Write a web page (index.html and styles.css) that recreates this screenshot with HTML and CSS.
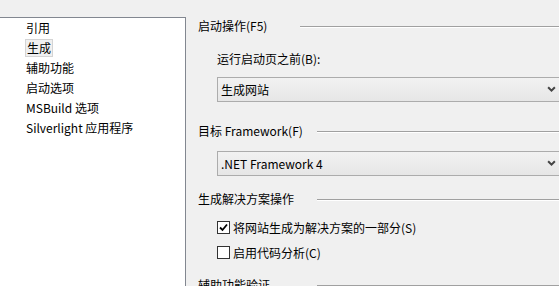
FILE: index.html
```html
<!DOCTYPE html>
<html lang="zh-CN">
<head>
    <meta charset="UTF-8">
    <title>项目属性 - 生成</title>
    <link rel="stylesheet" href="styles.css">
</head>
<body>
    <div class="window">
        <ul class="nav">
            <li class="nav-item">引用</li>
            <li class="nav-item"><span class="selected">生成</span></li>
            <li class="nav-item">辅助功能</li>
            <li class="nav-item">启动选项</li>
            <li class="nav-item">MSBuild 选项</li>
            <li class="nav-item">Silverlight 应用程序</li>
        </ul>

        <div class="pane">
            <div class="group-header">
                <span class="group-label label-narrow">启动操作(F5)</span>
                <span class="group-rule"></span>
            </div>
            <div class="field-label">运行启动页之前(B):</div>
            <div class="select">
                <span>生成网站</span>
                <svg class="chevron" viewBox="0 0 8 6" xmlns="http://www.w3.org/2000/svg">
                    <path d="M1 1L4 4L7 1" fill="none" stroke="currentColor" stroke-width="1.8"/>
                </svg>
            </div>

            <div class="group-header">
                <span class="group-label">目标 Framework(F)</span>
                <span class="group-rule"></span>
            </div>
            <div class="select select-tight">
                <span>.NET Framework 4</span>
                <svg class="chevron" viewBox="0 0 8 6" xmlns="http://www.w3.org/2000/svg">
                    <path d="M1 1L4 4L7 1" fill="none" stroke="currentColor" stroke-width="1.8"/>
                </svg>
            </div>

            <div class="group-header group-checks">
                <span class="group-label">生成解决方案操作</span>
                <span class="group-rule"></span>
            </div>
            <label class="check-row">
                <span class="checkbox">
                    <svg viewBox="0 0 11 11" xmlns="http://www.w3.org/2000/svg">
                        <path d="M2 5.5L4.5 8L9 2.5" fill="none" stroke="#000" stroke-width="1.8"/>
                    </svg>
                </span>
                将网站生成为解决方案的一部分(S)
            </label>
            <label class="check-row">
                <span class="checkbox"></span>
                启用代码分析(C)
            </label>

            <div class="group-header">
                <span class="group-label">辅助功能验证</span>
                <span class="group-rule"></span>
            </div>
        </div>
    </div>
</body>
</html>
```

FILE: styles.css
```css
body {
    margin: 0;
    background: #f0f0f0;
    color: #000;
    font-family: "Noto Sans CJK SC", "Segoe UI", "Noto Sans", sans-serif;
    font-size: 12px;
    overflow: hidden;
}

.window {
    display: flex;
    height: 286px;
}

/* left category list */
.nav {
    list-style: none;
    margin: 17px 0 0 0;
    padding: 0;
    width: 185px;
    flex-shrink: 0;
    background: #fff;
    border-top: 1px solid #828790;
    border-right: 1px solid #828790;
}

.nav-item {
    height: 20px;
    line-height: 20px;
    padding-left: 26px;
    white-space: nowrap;
}

.selected {
    display: inline-block;
    line-height: 16px;
    margin-left: -1px;
    padding: 0 1px;
    background: #f0f0f0;
    border: 1px solid #d4d4d4;
}

/* right property pane */
.pane {
    flex: 1;
    padding: 17px 0 0 12px;
    overflow: hidden;
}

.group-header {
    display: flex;
    align-items: center;
    height: 18px;
    line-height: 18px;
    margin-bottom: 12px;
}

.group-header:first-child {
    margin-bottom: 15px;
}

.group-checks {
    margin-bottom: 10px;
}

.group-label {
    width: 119px;
    flex-shrink: 0;
    white-space: nowrap;
}

.label-narrow {
    width: 102px;
}

.group-rule {
    flex: 1;
    border-top: 1px solid #a0a0a0;
    border-bottom: 1px solid #fff;
    margin-top: 1px;
}

.field-label {
    height: 18px;
    line-height: 18px;
    margin-left: 19px;
    margin-bottom: 9px;
}

.select {
    display: flex;
    align-items: center;
    justify-content: space-between;
    box-sizing: border-box;
    width: 346px;
    height: 25px;
    margin-left: 19px;
    margin-bottom: 20px;
    padding: 0 6px 0 3px;
    border: 1px solid #acacac;
    background: linear-gradient(#f2f2f2, #e6e6e6);
    white-space: nowrap;
}

.select-tight {
    margin-top: -1px;
    margin-bottom: 14px;
}

.chevron {
    width: 9px;
    height: 7px;
    color: #444;
}

.check-row {
    display: flex;
    align-items: center;
    height: 18px;
    margin-left: 19px;
    margin-bottom: 7px;
    white-space: nowrap;
}

.check-row + .check-row {
    margin-bottom: 15px;
}

.checkbox {
    display: flex;
    align-items: center;
    justify-content: center;
    box-sizing: border-box;
    width: 13px;
    height: 13px;
    margin-right: 3px;
    background: #fff;
    border: 1px solid #333;
}

.checkbox svg {
    width: 11px;
    height: 11px;
}
```
